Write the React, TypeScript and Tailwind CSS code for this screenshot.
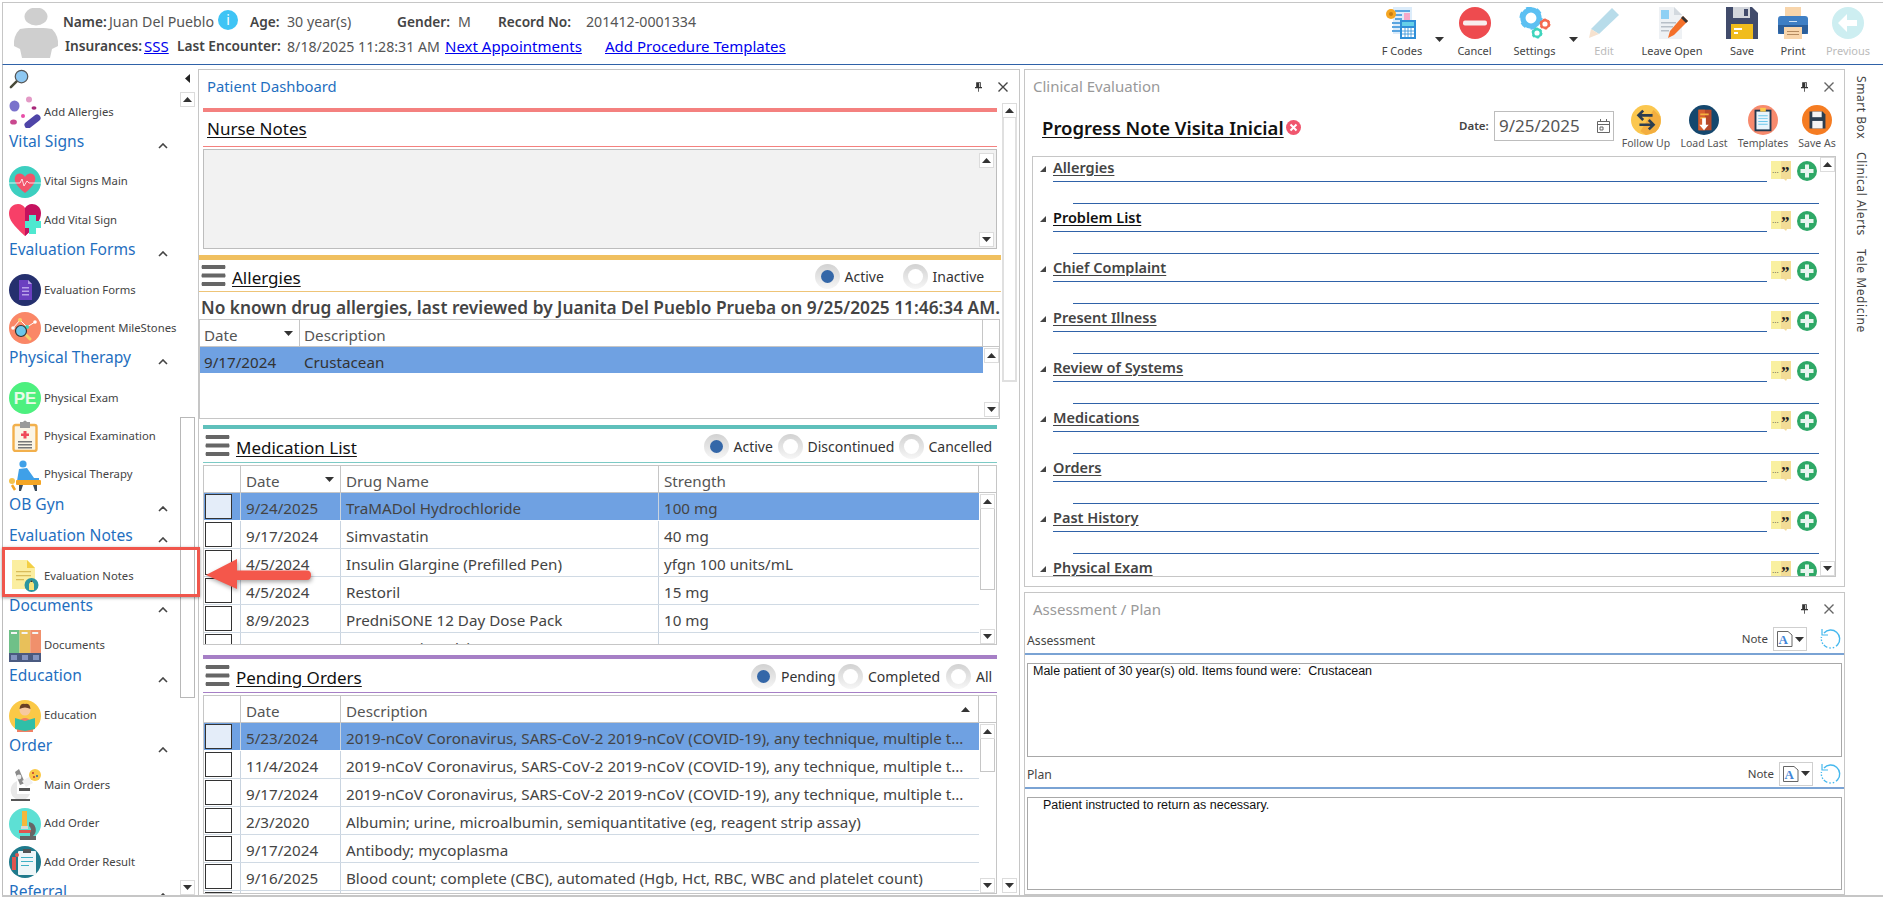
import type { ReactNode } from "react";

const Ic = ({ s = 32, children }: { s?: number; children: ReactNode }) => (
  <svg width={s} height={s} viewBox="0 0 32 32" className="shrink-0">
    {children}
  </svg>
);

const Tri = ({ up = false, dark = "#333" }: { up?: boolean; dark?: string }) => (
  <svg width="9" height="5" viewBox="0 0 9 5">
    <path d={up ? "M0 5L4.5 0L9 5Z" : "M0 0L4.5 5L9 0Z"} fill={dark} />
  </svg>
);

const Gear = ({ x, y, r, c }: { x: number; y: number; r: number; c: string }) => (
  <g>
    <circle cx={x} cy={y} r={r} fill="none" stroke={c} strokeWidth={r * 0.45} strokeDasharray={`${r * 0.55} ${r * 0.5}`} />
    <circle cx={x} cy={y} r={r * 0.85} fill="none" stroke={c} strokeWidth={r * 0.55} />
  </g>
);

// toolbar icons
const FCodes = () => (
  <Ic>
    <path d="M7 0H26V27H7Z" fill="#dcecfa" />
    <path d="M9 3H24V5H9Z" fill="#5aa5e0" />
    <path d="M18 6H24V14H18Z" fill="#f7a8c8" />
    <path d="M9 7H16V9H9ZM9 11H16V13H9ZM6 15H14V17H6ZM6 19H14V21H6ZM6 23H14V25H6Z" fill="#5aa5e0" />
    <path d="M14 13H30V32H14Z" fill="#2f8fd8" />
    <path d="M16 15H28V19H16Z" fill="#66d0e8" />
    <path d="M16 21H28V30H16Z" fill="#fff" />
    <path d="M19 21V30M22 21V30M25 21V30M16 24H28M16 27H28" stroke="#2f8fd8" strokeWidth="0.8" />
    <circle cx="5" cy="7" r="5" fill="#f5a623" />
    <circle cx="5" cy="7" r="2" fill="#c97e10" />
  </Ic>
);
const Cancel = () => (
  <Ic>
    <circle cx="16" cy="16" r="16" fill="#ee4b4f" />
    <rect x="4" y="13.5" width="24" height="5" rx="2" fill="#f8eded" />
  </Ic>
);
const Settings = () => (
  <Ic>
    <Gear x={12} y={11} r={9.5} c="#5cc0f2" />
    <Gear x={26} y={17} r={4.5} c="#f4694f" />
    <Gear x={18} y={26} r={4.5} c="#3fd4bc" />
  </Ic>
);
const Edit = () => (
  <Ic>
    <path d="M24 1L31 8L11 27L3 22Z" fill="#b8dcea" />
    <path d="M3 22L11 27L1 31Z" fill="#f6e2cf" />
  </Ic>
);
const LeaveOpen = () => (
  <Ic>
    <path d="M3 0H18L26 8V32H3Z" fill="#eef1f4" />
    <path d="M18 0L26 8H18Z" fill="#d3d9df" />
    <path d="M5 3H13V12H5Z" fill="#8ed0f4" />
    <path d="M5 15H20V16.5H5ZM5 19H17V20.5H5ZM5 23H13V24.5H5Z" fill="#b7bfc7" />
    <path d="M27 9L32 14L18 28L12 31L14 24Z" fill="#f4702a" />
    <path d="M27 9L32 14L30 16L25 11Z" fill="#333" />
  </Ic>
);
const Save = () => (
  <Ic>
    <path d="M0 0H26L32 6V32H0Z" fill="#414b6b" />
    <path d="M7 0H24V11H7Z" fill="#d3d6dc" />
    <path d="M18 2H22V9H18Z" fill="#414b6b" />
    <path d="M5 17H27V32H5Z" fill="#f0bc1c" />
    <path d="M8 21H16V23H8ZM8 25H12V27H8Z" fill="#fff" />
  </Ic>
);
const Print = () => (
  <Ic>
    <path d="M8 0H24V12H8Z" fill="#f8d5ab" />
    <path d="M1 12Q1 9 4 9H28Q31 9 31 12V27H1Z" fill="#3f7fc4" />
    <path d="M1 18H31V23Q31 27 28 27H4Q1 27 1 23Z" fill="#2c5f9b" />
    <path d="M7 20H25V32H7Z" fill="#f8d5ab" />
    <path d="M10 24H22V25H10ZM10 27H22V28H10Z" fill="#b58b60" />
    <path d="M12 14H20V15H12Z" fill="#cfe2f5" />
  </Ic>
);
const Previous = () => (
  <Ic>
    <circle cx="16" cy="16" r="16" fill="#cdeef1" />
    <path d="M6 16L15 7V13H25V19H15V25Z" fill="#fff" />
  </Ic>
);

// sidebar icons
const Magnifier = () => (
  <Ic s={20}>
    <path d="M13 19L3 29" stroke="#4a4a3a" strokeWidth="4" strokeLinecap="round" />
    <circle cx="20" cy="12" r="10" fill="#8ec8f2" stroke="#555" strokeWidth="2" />
  </Ic>
);
const Allergy = () => (
  <Ic>
    <ellipse cx="5.5" cy="10" rx="5" ry="5.5" fill="#7a72cc" />
    <circle cx="20" cy="3.5" r="3" fill="#e39ac6" />
    <ellipse cx="25" cy="12" rx="2.5" ry="1.8" fill="#a8287a" />
    <circle cx="14" cy="20" r="2" fill="#e84fa8" />
    <ellipse cx="4.5" cy="26" rx="3.4" ry="2.6" fill="#c9488f" />
    <path d="M19 29L28 22" stroke="#4f45a8" strokeWidth="7" strokeLinecap="round" />
  </Ic>
);
const VitalMain = () => (
  <Ic>
    <circle cx="16" cy="16" r="16" fill="#3dcfc0" />
    <path d="M16 27C6 19 5 14 6 11C8 6 14 7 16 11C18 7 24 6 26 11C27 14 26 19 16 27Z" fill="#f2536a" />
    <path d="M0 17H11L13 13L15 20L18 15L20 17H32" stroke="#fff" strokeWidth="0.8" fill="none" />
  </Ic>
);
const VitalAdd = () => (
  <Ic>
    <path d="M16 32C4 21 0 16 0 9C0 3 5 0 9 0C12 0 15 2 16 4Z" fill="#f73f68" />
    <path d="M16 32C28 21 32 16 32 9C32 3 27 0 23 0C20 0 17 2 16 4Z" fill="#c4125f" />
    <path d="M16 4L16 32L21 27V4Z" fill="#c4125f" />
    <path d="M20 11H27V17H32V24H27V30H20V24H16V17H20Z" fill="#4fe8d0" />
  </Ic>
);
const EvalForms = () => (
  <Ic>
    <circle cx="16" cy="16" r="16" fill="#25306e" />
    <path d="M10 6H19L23 10V26H10Z" fill="#6b3fc0" />
    <path d="M19 6L23 10H19Z" fill="#b8a0e8" />
    <path d="M13 13H20V14.5H13ZM13 16.5H20V18H13ZM13 20H20V21.5H13Z" fill="#b8a0e8" />
  </Ic>
);
const Milestones = () => (
  <Ic>
    <circle cx="16" cy="16" r="16" fill="#fa8767" />
    <path d="M4 16L11 8L18 15L26 10" stroke="#fff" strokeWidth="1" fill="none" />
    <circle cx="4" cy="16" r="1.8" fill="#fff" />
    <circle cx="11" cy="8" r="2" fill="#f8d06a" />
    <circle cx="18" cy="15" r="2" fill="#3fd4bc" />
    <circle cx="26" cy="10" r="1.8" fill="#fff" />
    <path d="M17 23L21 27" stroke="#f8d06a" strokeWidth="3" strokeLinecap="round" />
    <circle cx="12" cy="19" r="5.5" fill="#6cc6ea" stroke="#333" strokeWidth="1.2" />
  </Ic>
);
const PE = () => (
  <Ic>
    <circle cx="16" cy="16" r="16" fill="#4df07f" />
    <text x="16" y="22" textAnchor="middle" fontSize="17" fontWeight="900" fill="#e9fbe9" fontFamily="Liberation Sans">PE</text>
  </Ic>
);
const PhysExam = () => (
  <Ic>
    <rect x="4.5" y="5" width="23" height="26" rx="2" fill="#fbf5e6" stroke="#f2b04c" strokeWidth="2.4" />
    <path d="M11 2H14Q16 -1 18 2H21V8H11Z" fill="#9a9a9a" />
    <path d="M14.5 11H17.5V13.5H20V16H17.5V18.5H14.5V16H12V13.5H14.5Z" fill="#ef4a5a" />
    <path d="M9 21H23V22.4H9ZM9 24H23V25.4H9ZM9 27H23V28.4H9Z" fill="#777" />
  </Ic>
);
const PhysTherapy = () => (
  <Ic>
    <circle cx="14" cy="5" r="3.6" fill="#3fa0e8" />
    <path d="M10 10L18 9L25 19H30V22H8Z" fill="#3fa0e8" />
    <rect x="7" y="21" width="25" height="5" rx="1" fill="#f4a524" />
    <circle cx="3" cy="22" r="3" fill="#f4c24c" />
    <path d="M10 26H14L12 32H10ZM24 26H28V32H26Z" fill="#3a4a5a" />
    <path d="M3 26L6 31" stroke="#f4a524" strokeWidth="2.5" />
  </Ic>
);
const EvalNotes = () => (
  <Ic>
    <path d="M3 0H18L26 8V29H3Z" fill="#fbeea0" />
    <path d="M18 0L26 8H18Z" fill="#f3cf45" />
    <path d="M7 11H22V12.3H7ZM7 15H22V16.3H7ZM7 19H15V20.3H7Z" fill="#d8bc5a" />
    <circle cx="22.5" cy="25" r="7" fill="#2b96a0" />
    <path d="M20 30V24L22.5 20L25 24V30Z" fill="#f6e27a" />
    <path d="M21.3 22L22.5 20L23.7 22Z" fill="#333" />
  </Ic>
);
const Docs = () => (
  <Ic>
    <path d="M0 0H10.6V23H0Z" fill="#6fc088" />
    <path d="M10.6 0H21.2V23H10.6Z" fill="#e8c05a" />
    <path d="M21.2 0H32V23H21.2Z" fill="#f0906c" />
    <path d="M0 23H32V32H0Z" fill="#4a5a80" />
    <path d="M2 2H8V4H2ZM12.6 2H18.6V4H12.6ZM23.2 2H29.2V4H23.2Z" fill="#f4f4f4" />
    <path d="M2 25H8V30H2ZM13 25H19V30H13ZM24 25H30V30H24Z" fill="#8494c0" />
  </Ic>
);
const Education = () => (
  <Ic>
    <circle cx="16" cy="16" r="16" fill="#fbc947" />
    <path d="M8 32Q8 18 16 18Q24 18 24 32Z" fill="#f07f63" />
    <circle cx="16" cy="10" r="5.5" fill="#f7c9a0" />
    <path d="M10.5 9Q11 3 16 4Q21 3 21.5 9Q16 6 10.5 9Z" fill="#6a4026" />
    <path d="M6 18L16 21L26 18V29L16 31L6 29Z" fill="#2fbfa8" />
  </Ic>
);
const MainOrders = () => (
  <Ic>
    <path d="M8 12A10 10 0 1 0 21 25H8Z" fill="#e8e8e8" />
    <path d="M10 0L16 14L11 16L6 3Z" fill="#8a8a8a" />
    <circle cx="10" cy="8" r="2.4" fill="#eee" />
    <path d="M10 19H21V22H10ZM2 30H21V32H2Z" fill="#555" />
    <path d="M13 12L20 8L24 14L17 18Z" fill="#f0f0f0" />
    <circle cx="26" cy="6" r="6" fill="#fbc947" />
    <circle cx="24" cy="4" r="1" fill="#c0392b" />
    <circle cx="28" cy="7" r="1" fill="#2c5f9b" />
    <circle cx="25" cy="8" r="1" fill="#c0392b" />
  </Ic>
);
const AddOrder = () => (
  <Ic>
    <circle cx="16" cy="16" r="16" fill="#5de0d4" />
    <path d="M13 3H18V18H13Z" fill="#f4b73c" />
    <path d="M12 18H19V21H12Z" fill="#d8d8d8" />
    <path d="M10 22H25V25H10Z" fill="#e0554f" />
    <path d="M11 28H27V32H11Z" fill="#666" />
    <path d="M20 14A8 8 0 0 1 24 28H21V25A5 5 0 0 0 20 18Z" fill="#666" />
  </Ic>
);
const OrderResult = () => (
  <Ic>
    <circle cx="16" cy="16" r="16" fill="#1f7a8c" />
    <rect x="9" y="5" width="18" height="24" rx="1" fill="#eef6f8" />
    <path d="M14 3H22V7H14Z" fill="#555" />
    <path d="M12 11H24V12H12ZM12 15H24V16H12ZM12 19H20V20H12Z" fill="#3fb0c4" />
    <circle cx="8" cy="9" r="2" fill="#e0554f" />
    <path d="M3 11H7V24H3Z" fill="#e0554f" />
  </Ic>
);

// clinical toolbar
const FollowUp = () => (
  <Ic s={30}>
    <circle cx="16" cy="16" r="16" fill="#fbc74f" />
    <path d="M26 29A16 16 0 0 0 31 12L24 5L10 28L16 32Z" fill="#f3ae3f" />
    <path d="M23 11H9M13 6L8 11L13 16M9 21H23M19 16L24 21L19 26" stroke="#2c3e50" strokeWidth="2.8" fill="none" />
  </Ic>
);
const LoadLast = () => (
  <Ic s={30}>
    <circle cx="16" cy="16" r="16" fill="#14476e" />
    <path d="M10 5H24V27H10Z" fill="#b5482a" />
    <path d="M10 5H17V27H10Z" fill="#d75f2f" />
    <path d="M12 9H21V11H12ZM12 13H18V15H12Z" fill="#f5b340" />
    <path d="M14 14H18V21H21L16 27L11 21H14Z" fill="#fff" />
  </Ic>
);
const Templates = () => (
  <Ic s={30}>
    <circle cx="16" cy="16" r="16" fill="#f78a6d" />
    <rect x="7" y="5" width="18" height="23" fill="#22384f" />
    <rect x="9" y="7" width="14" height="19" fill="#e8f4fb" />
    <path d="M11 11H21V12H11ZM11 14H21V15H11ZM11 17H21V18H11ZM11 20H21V21H11Z" fill="#6cc6ea" />
    <path d="M13 3H19V7H13Z" fill="#fbc947" />
  </Ic>
);
const SaveAs = () => (
  <Ic s={30}>
    <circle cx="16" cy="16" r="16" fill="#f57c22" />
    <path d="M8 7H22L25 10V25H8Z" fill="#2c3e50" />
    <path d="M11 7H21V13H11Z" fill="#f4f4f4" />
    <path d="M11 17H22V25H11Z" fill="#f4f4f4" />
  </Ic>
);
const Quote = () => (
  <svg width="20" height="20" viewBox="0 0 20 20" className="shrink-0">
    <path d="M0 0H10V18H0Z" fill="#f9f0a0" />
    <path d="M10 0H20V18H16L15 20L13 18H10Z" fill="#f3dc96" />
    <text x="1" y="12" fontSize="8" fill="#333" fontFamily="Liberation Sans">...</text>
    <text x="10" y="17" fontSize="17" fontWeight="700" fill="#222" fontFamily="Liberation Serif">”</text>
  </svg>
);
const Plus = () => (
  <svg width="20" height="20" viewBox="0 0 20 20" className="shrink-0">
    <circle cx="10" cy="10" r="10" fill="#2ea866" />
    <path d="M8 3.5H12V8H16.5V12H12V16.5H8V12H3.5V8H8Z" fill="#e8f5ee" />
  </svg>
);
const Spin = () => (
  <svg width="22" height="22" viewBox="0 0 22 22" className="shrink-0">
    <path d="M5 5A9 9 0 1 1 6 18" stroke="#45b8ee" strokeWidth="1.4" strokeDasharray="30 2 1.5 2 1.5 2" fill="none" />
    <path d="M6 18A9 9 0 0 1 2.5 9" stroke="#45b8ee" strokeWidth="1.4" strokeDasharray="1.5 1.5" fill="none" />
    <path d="M3 1V7H9" fill="none" stroke="#45b8ee" strokeWidth="1.2" />
  </svg>
);
const NoteDoc = () => (
  <svg width="16" height="16" viewBox="0 0 16 16" className="shrink-0">
    <path d="M0.5 0.5H11L15 4V15.5H0.5Z" fill="#fff" stroke="#666" />
    <text x="1.5" y="13" fontSize="13" fontWeight="700" fill="#3f86d8" fontFamily="Liberation Serif">A</text>
  </svg>
);
const Calendar = () => (
  <svg width="13" height="14" viewBox="0 0 13 14">
    <path d="M0.5 2.5H12.5V13.5H0.5ZM0.5 5.5H12.5M3.5 0V3M9.5 0V3M3 8H6V11H3Z" fill="none" stroke="#666" strokeWidth="1" />
  </svg>
);
const Pin = () => (
  <svg width="7" height="10" viewBox="0 0 9 12">
    <path d="M1.5 0H7.5V6H9V7.5H5V12H4V7.5H0V6H1.5Z" fill="#333" />
    <path d="M5.5 1H6.5V6H5.5Z" fill="#fff" />
  </svg>
);
const Close = ({ c = "#444" }: { c?: string }) => (
  <svg width="10" height="10" viewBox="0 0 10 10">
    <path d="M0.5 0.5L9.5 9.5M9.5 0.5L0.5 9.5" stroke={c} strokeWidth="1.4" />
  </svg>
);
const Chevron = () => (
  <svg width="10" height="6" viewBox="0 0 10 6">
    <path d="M1 5L5 1L9 5" fill="none" stroke="#444" strokeWidth="1.6" />
  </svg>
);
const Burger = () => (
  <svg width="25" height="21" viewBox="0 0 25 21" className="shrink-0">
    <path d="M1 0H24Q25 2 24 4H1Q0 2 1 0ZM1 8.5H24Q25 10.5 24 12.5H1Q0 10.5 1 8.5ZM1 17H24Q25 19 24 21H1Q0 19 1 17Z" fill="#666" />
  </svg>
);

const ScrollBtn = ({ up = false }: { up?: boolean }) => (
  <div className="flex h-[15px] w-[15px] shrink-0 items-center justify-center border border-[#dcdcdc] bg-white">
    <Tri up={up} />
  </div>
);

const Radio = ({ on = false, label, w }: { on?: boolean; label: string; w: string }) => (
  <div className={`flex shrink-0 items-center pt-[1px] ${w}`}>
    <div className="flex h-[25px] w-[25px] shrink-0 items-center justify-center rounded-full bg-linear-to-b from-[#d2d2d2] to-[#f6f6f6]">
      <div className={on ? "h-[13px] w-[13px] rounded-full bg-[#3467a8]" : "h-[15px] w-[15px] rounded-full bg-white"} />
    </div>
    <span className="ml-[5px] pt-[1px] text-[14px] whitespace-nowrap text-[#333]">{label}</span>
  </div>
);

const SectionHead = ({
  title,
  bar,
  line,
  children,
}: {
  title: string;
  bar: string;
  line: string;
  children?: ReactNode;
}) => (
  <>
    <div className={`shrink-0 ${bar}`} />
    <div className={`flex shrink-0 items-center ${line}`}>
      <div className="ml-[2px] flex items-center">
        <Burger />
      </div>
      <span className="ml-[6px] flex-1 pt-[5px] text-[17px] text-[#111] underline underline-offset-2">{title}</span>
      {children}
    </div>
  </>
);

const Check = ({ on = false }: { on?: boolean }) => (
  <div className={`ml-[1px] h-[25px] w-[27px] border border-[#333] ${on ? "bg-[#e4edf9]" : "bg-white"}`} />
);

const TableRow = ({ cells, widths, on = false }: { cells: string[]; widths: string[]; on?: boolean }) => (
  <div className={`flex h-[28px] shrink-0 border-b text-[15.2px] text-[#444] ${on ? "border-white bg-[#6fa1e2]" : "border-[#d0dae4]"}`}>
    <div className="flex w-[37px] shrink-0 items-center border-r border-[#c9d4e0]">
      <Check on={on} />
    </div>
    {cells.map((c, i) => (
      <div
        key={i}
        className={`flex shrink-0 items-center overflow-hidden pt-[3px] pl-[5px] whitespace-nowrap ${widths[i]} ${i === 0 || (i === 1 && cells.length > 2) ? "border-r border-[#c9d4e0]" : ""}`}
      >
        {c}
      </div>
    ))}
  </div>
);

const meds = [
  ["9/24/2025", "TraMADol Hydrochloride", "100 mg"],
  ["9/17/2024", "Simvastatin", "40 mg"],
  ["4/5/2024", "Insulin Glargine (Prefilled Pen)", "yfgn 100 units/mL"],
  ["4/5/2024", "Restoril", "15 mg"],
  ["8/9/2023", "PredniSONE 12 Day Dose Pack", "10 mg"],
  ["7/9/2019", "Atorvastatin Calcium", "40 mg"],
];
const covid = "2019-nCoV Coronavirus, SARS-CoV-2 2019-nCoV (COVID-19), any technique, multiple t...";
const orders = [
  ["5/23/2024", covid],
  ["11/4/2024", covid],
  ["9/17/2024", covid],
  ["2/3/2020", "Albumin; urine, microalbumin, semiquantitative (eg, reagent strip assay)"],
  ["9/17/2024", "Antibody; mycoplasma"],
  ["9/16/2025", "Blood count; complete (CBC), automated (Hgb, Hct, RBC, WBC and platelet count)"],
  ["", ""],
];

const side: { h?: boolean; label: string; icon?: ReactNode }[] = [
  { label: "Add Allergies", icon: <Allergy /> },
  { h: true, label: "Vital Signs" },
  { label: "Vital Signs Main", icon: <VitalMain /> },
  { label: "Add Vital Sign", icon: <VitalAdd /> },
  { h: true, label: "Evaluation Forms" },
  { label: "Evaluation Forms", icon: <EvalForms /> },
  { label: "Development MileStones", icon: <Milestones /> },
  { h: true, label: "Physical Therapy" },
  { label: "Physical Exam", icon: <PE /> },
  { label: "Physical Examination", icon: <PhysExam /> },
  { label: "Physical Therapy", icon: <PhysTherapy /> },
  { h: true, label: "OB Gyn" },
  { h: true, label: "Evaluation Notes" },
  { label: "Evaluation Notes", icon: <EvalNotes /> },
  { h: true, label: "Documents" },
  { label: "Documents", icon: <Docs /> },
  { h: true, label: "Education" },
  { label: "Education", icon: <Education /> },
  { h: true, label: "Order" },
  { label: "Main Orders", icon: <MainOrders /> },
  { label: "Add Order", icon: <AddOrder /> },
  { label: "Add Order Result", icon: <OrderResult /> },
  { h: true, label: "Referral" },
];

const Sidebar = () => (
  <aside className="flex w-[196px] shrink-0 overflow-hidden border-l border-[#bdbdbd]">
    <div className="w-[177px] shrink-0 overflow-hidden pl-[6px]">
      <div className="h-[28px] pt-[4px]">
        <Magnifier />
      </div>
      {side.map((s, i) =>
        s.h ? (
          <div key={i} className="flex h-[31.5px] items-start">
            <span className="w-[149px] text-[15.6px] leading-[20px] text-[#1f6fc0]">{s.label}</span>
            <span className="mt-[12px] flex">
              <Chevron />
            </span>
          </div>
        ) : (
          <div key={i} className="flex h-[38.3px] items-center">
            {s.icon}
            <span className="ml-[3px] text-[11.3px] whitespace-nowrap text-[#444]">{s.label}</span>
          </div>
        ),
      )}
    </div>
    <div className="flex w-[15px] shrink-0 flex-col">
      <div className="flex h-[27px] items-center justify-center pt-[1px]">
        <svg width="5" height="9" viewBox="0 0 5 9">
          <path d="M5 0L0 4.5L5 9Z" fill="#222" />
        </svg>
      </div>
      <ScrollBtn up />
      <div className="h-[775px]">
        <div className="mt-[310px] h-[281px] border border-[#b8b8b8]" />
      </div>
      <ScrollBtn />
    </div>
  </aside>
);

const Dashboard = () => (
  <section className="mt-[4px] flex h-[828px] w-[822px] shrink-0 flex-col overflow-hidden border border-[#c6c6c6]">
    <div className="flex h-[33px] shrink-0 items-center">
      <span className="ml-[8px] flex-1 text-[14.8px] text-[#1f6fc0]">Patient Dashboard</span>
      <Pin />
      <span className="mr-[11px] ml-[16px] flex">
        <Close />
      </span>
    </div>
    <div className="flex h-[794px] shrink-0">
      <div className="flex w-[803px] shrink-0 flex-col overflow-hidden">
        <div className="mt-[5px] ml-[4px] h-[4px] w-[794px] shrink-0 bg-[#f4817f]" />
        <div className="ml-[4px] flex h-[35px] w-[794px] shrink-0 items-center border-b border-[#f4817f]">
          <span className="ml-[4px] text-[17px] text-[#111] underline underline-offset-2">Nurse Notes</span>
        </div>
        <div className="mt-[2px] ml-[4px] flex h-[100px] w-[794px] shrink-0 justify-end border border-[#bdbdbd] bg-[#f2f2f2] pt-[3px] pr-[2px]">
          <div className="flex h-[94px] w-[15px] flex-col justify-between">
            <ScrollBtn up />
            <ScrollBtn />
          </div>
        </div>

        <div className="mt-[6px]" />
        <SectionHead title="Allergies" bar="h-[5px] w-[802px] bg-[#f0c060]" line="h-[32px] w-[802px] border-b border-[#eec477]">
          <Radio on label="Active" w="w-[88px]" />
          <Radio label="Inactive" w="w-[98.5px]" />
        </SectionHead>
        <div className="flex h-[27px] shrink-0 items-center pt-[4px] pl-[2px] text-[17.3px] font-semibold whitespace-nowrap text-[#444]">
          No known drug allergies, last reviewed by Juanita Del Pueblo Prueba on 9/25/2025 11:46:34 AM.
        </div>
        <div className="flex h-[100px] w-[801px] shrink-0 flex-col border border-[#c6c6c6]">
          <div className="flex h-[27px] shrink-0 border-b border-[#c6c6c6] text-[15.2px] text-[#555]">
            <div className="flex w-[100px] shrink-0 items-center justify-between border-r border-[#c6c6c6] pr-[6px] pl-[4px]">
              <span className="pt-[4px]">Date</span>
              <Tri />
            </div>
            <div className="flex w-[683px] shrink-0 items-center border-r border-[#c6c6c6] pt-[4px] pl-[4px]">Description</div>
          </div>
          <div className="flex flex-1">
            <div className="w-[783px] shrink-0">
              <div className="flex h-[26px] items-center bg-[#6fa1e2] pt-[4px] text-[15.2px] text-[#333]">
                <span className="w-[100px] pl-[4px]">9/17/2024</span>
                <span className="pl-[4px]">Crustacean</span>
              </div>
            </div>
            <div className="flex flex-1 flex-col items-center justify-between py-[1px]">
              <ScrollBtn up />
              <ScrollBtn />
            </div>
          </div>
        </div>

        <div className="mt-[6px]" />
        <SectionHead title="Medication List" bar="ml-[4px] h-[4px] w-[794px] bg-[#5fc0bb]" line="ml-[4px] h-[34px] w-[794px] border-b border-[#7ccac5]">
          <Radio on label="Active" w="w-[74px]" />
          <Radio label="Discontinued" w="w-[121px]" />
          <Radio label="Cancelled" w="w-[98.5px]" />
        </SectionHead>
        <div className="mt-[2px] ml-[4px] flex h-[180px] w-[794px] shrink-0 flex-col overflow-hidden border border-[#c6c6c6]">
          <div className="flex h-[27px] shrink-0 border-b border-[#c6c6c6] text-[15.2px] text-[#555]">
            <div className="w-[37px] shrink-0 border-r border-[#c6c6c6]" />
            <div className="flex w-[100px] shrink-0 items-center justify-between border-r border-[#c6c6c6] pr-[6px] pl-[5px]">
              <span className="pt-[4px]">Date</span>
              <Tri />
            </div>
            <div className="flex w-[318px] shrink-0 items-center border-r border-[#c6c6c6] pt-[4px] pl-[5px]">Drug Name</div>
            <div className="flex w-[320px] shrink-0 items-center border-r border-[#c6c6c6] pt-[4px] pl-[5px]">Strength</div>
          </div>
          <div className="flex flex-1 overflow-hidden">
            <div className="w-[775px] shrink-0">
              {meds.map((m, i) => (
                <TableRow key={i} cells={m} widths={["w-[100px]", "w-[318px]", "w-[320px]"]} on={i === 0} />
              ))}
            </div>
            <div className="flex flex-1 flex-col items-center pt-[1px]">
              <ScrollBtn up />
              <div className="h-[81px] w-[15px] border border-t-0 border-[#c6c6c6]" />
              <div className="flex-1" />
              <ScrollBtn />
            </div>
          </div>
        </div>

        <div className="mt-[10px]" />
        <SectionHead title="Pending Orders" bar="ml-[4px] h-[4px] w-[794px] bg-[#a67fc6]" line="ml-[4px] h-[34px] w-[794px] border-b border-[#a67fc6]">
          <Radio on label="Pending" w="w-[87px]" />
          <Radio label="Completed" w="w-[108px]" />
          <Radio label="All" w="w-[51px]" />
        </SectionHead>
        <div className="mt-[2px] ml-[4px] flex h-[199px] w-[794px] shrink-0 flex-col overflow-hidden border border-[#c6c6c6]">
          <div className="flex h-[27px] shrink-0 border-b border-[#c6c6c6] text-[15.2px] text-[#555]">
            <div className="w-[37px] shrink-0 border-r border-[#c6c6c6]" />
            <div className="flex w-[100px] shrink-0 items-center border-r border-[#c6c6c6] pt-[4px] pl-[5px]">Date</div>
            <div className="flex w-[638px] shrink-0 items-center justify-between border-r border-[#c6c6c6] pr-[8px] pl-[5px]">
              <span className="pt-[4px]">Description</span>
              <Tri up />
            </div>
          </div>
          <div className="flex flex-1 overflow-hidden">
            <div className="w-[775px] shrink-0">
              {orders.map((o, i) => (
                <TableRow key={i} cells={o} widths={["w-[100px]", "w-[638px]"]} on={i === 0} />
              ))}
            </div>
            <div className="flex flex-1 flex-col items-center pt-[1px]">
              <ScrollBtn up />
              <div className="h-[33px] w-[15px] border border-t-0 border-[#c6c6c6]" />
              <div className="flex-1" />
              <ScrollBtn />
            </div>
          </div>
        </div>
      </div>
      <div className="flex w-[15px] shrink-0 flex-col">
        <ScrollBtn up />
        <div className="h-[264px] border-x-2 border-b-2 border-[#e0e0e0]" />
        <div className="flex-1" />
        <div className="mb-[4px]">
          <ScrollBtn />
        </div>
      </div>
    </div>
  </section>
);

const treeItems = ["Allergies", "Problem List", "Chief Complaint", "Present Illness", "Review of Systems", "Medications", "Orders", "Past History", "Physical Exam"];

const ClinBtn = ({ icon, label, w }: { icon: ReactNode; label: string; w: string }) => (
  <div className={`flex shrink-0 flex-col items-center ${w}`}>
    {icon}
    <span className="mt-[1px] text-[10.5px] whitespace-nowrap text-[#555]">{label}</span>
  </div>
);

const Clinical = () => (
  <section className="flex h-[518px] shrink-0 flex-col overflow-hidden border border-[#c6c6c6]">
    <div className="flex h-[33px] shrink-0 items-center">
      <span className="ml-[8px] flex-1 text-[15px] text-[#999]">Clinical Evaluation</span>
      <Pin />
      <span className="mr-[10px] ml-[16px] flex">
        <Close c="#666" />
      </span>
    </div>
    <div className="flex h-[53px] shrink-0">
      <div className="flex flex-1 items-center pb-[4px] pl-[17px]">
        <span className="text-[18.5px] font-semibold text-[#111] underline underline-offset-2">Progress Note Visita Inicial</span>
        <svg width="15" height="15" viewBox="0 0 15 15" className="ml-[2px]">
          <circle cx="7.5" cy="7.5" r="7.5" fill="#f0566e" />
          <path d="M4.5 4.5L10.5 10.5M10.5 4.5L4.5 10.5" stroke="#fff" strokeWidth="2" />
        </svg>
      </div>
      <div className="flex h-[46px] items-center">
        <span className="w-[35px] text-[11.5px] font-semibold text-[#444]">Date:</span>
        <div className="flex h-[30px] w-[120px] items-center justify-between border border-[#bdbdbd] pr-[3px] pl-[4px] text-[17px] text-[#555]">
          9/25/2025
          <Calendar />
        </div>
      </div>
      <div className="ml-[3px] flex pt-[2px] pr-[3px]">
        <ClinBtn icon={<FollowUp />} label="Follow Up" w="w-[58px]" />
        <ClinBtn icon={<LoadLast />} label="Load Last" w="w-[58px]" />
        <ClinBtn icon={<Templates />} label="Templates" w="w-[60px]" />
        <ClinBtn icon={<SaveAs />} label="Save As" w="w-[48px]" />
      </div>
    </div>
    <div className="ml-[7px] flex h-[421px] w-[804px] shrink-0 overflow-hidden border border-[#c6c6c6]">
      <div className="w-[787px] shrink-0 overflow-hidden">
        {treeItems.map((t) => (
          <div key={t} className="h-[50px]">
            <div className="flex h-[26px] items-start">
              <svg width="6" height="6" viewBox="0 0 6 6" className="mt-[9px] ml-[7px] shrink-0">
                <path d="M6 0V6H0Z" fill="#444" />
              </svg>
              <div className="ml-[7px] h-[25px] w-[714px] shrink-0 border-b border-[#2f62a8] leading-[21px]">
                <span className={`text-[14.5px] font-semibold underline underline-offset-2 ${t === "Problem List" ? "text-[#111]" : "text-[#444]"}`}>{t}</span>
              </div>
              <div className="mt-[4px] ml-[4px] flex items-center gap-[6px]">
                <Quote />
                <Plus />
              </div>
            </div>
            <div className="mt-[20px] ml-[40px] h-[1px] w-[746px] bg-[#2f62a8]" />
          </div>
        ))}
      </div>
      <div className="flex w-[15px] shrink-0 flex-col justify-between">
        <ScrollBtn up />
        <ScrollBtn />
      </div>
    </div>
  </section>
);

const NoteRow = ({ label, row, gap }: { label: string; row: string; gap: string }) => (
  <div className={`flex shrink-0 items-center border-b-2 border-[#7aa3d4] pl-[2px] ${row}`}>
    <span className="flex-1 pt-[4px] text-[12.2px] text-[#444]">{label}</span>
    <span className="text-[11.5px] text-[#444]">Note</span>
    <div className={`ml-[5px] flex h-[24px] w-[34px] items-center justify-center gap-[2px] border border-[#cfcfcf] ${gap}`}>
      <NoteDoc />
      <Tri />
    </div>
    <Spin />
    <span className="w-[3px]" />
  </div>
);

const Assessment = () => (
  <section className="mt-[5px] flex h-[303px] shrink-0 flex-col overflow-hidden border border-[#c6c6c6]">
    <div className="flex h-[32px] shrink-0 items-center">
      <span className="ml-[8px] flex-1 text-[15px] text-[#999]">Assessment / Plan</span>
      <Pin />
      <span className="mr-[10px] ml-[16px] flex">
        <Close c="#666" />
      </span>
    </div>
    <NoteRow label="Assessment" row="h-[30px]" gap="mr-[12px]" />
    <div className="mt-[8px] ml-[2px] h-[94px] w-[815px] shrink-0 border border-[#a8a8a8] px-[5px] font-['Liberation_Sans',sans-serif] text-[12.5px] leading-[14px] text-[#111]">
      Male patient of 30 year(s) old. Items found were:&nbsp; Crustacean
    </div>
    <NoteRow label="Plan" row="mt-[3px] h-[29px]" gap="mr-[6px]" />
    <div className="mt-[8px] ml-[2px] h-[93px] w-[815px] shrink-0 border border-[#a8a8a8] pl-[15px] font-['Liberation_Sans',sans-serif] text-[12.5px] leading-[14px] text-[#111]">
      Patient instructed to return as necessary.
    </div>
  </section>
);

const Tool = ({ icon, label, w, off = false }: { icon: ReactNode; label: string; w: string; off?: boolean }) => (
  <div className={`flex shrink-0 flex-col items-center ${w}`}>
    {icon}
    <span className={`mt-[4px] text-[11px] whitespace-nowrap ${off ? "text-[#bbb]" : "text-[#444]"}`}>{label}</span>
  </div>
);
const Caret = () => (
  <div className="flex h-[36px] w-[14px] shrink-0 items-end justify-center pb-[1px]">
    <Tri />
  </div>
);

const lbl = "shrink-0 pt-[5px] text-[13.7px] font-semibold whitespace-nowrap text-[#444]";
const val = "shrink-0 pt-[5px] text-[14.2px] whitespace-nowrap text-[#555]";
const link = "shrink-0 pt-[5px] text-[15px] whitespace-nowrap text-[#0000ee] underline";

const Header = () => (
  <header className="mt-[2px] ml-[2px] flex h-[63px] shrink-0 border-t border-b border-l border-[#c6c6c6] border-b-[#2f62a8]">
    <svg width="46" height="50" viewBox="0 0 46 50" className="mt-[5px] ml-[10px] shrink-0">
      <ellipse cx="23" cy="8.5" rx="11.5" ry="9" fill="#cfcfcf" />
      <path d="M7 21Q13 20 16 20H30Q33 20 39 21Q46 28 45 38L39 41L37 50H9L7 41L1 38Q0 28 7 21Z" fill="#cfcfcf" />
    </svg>
    <div className="ml-[4px] flex w-[800px] shrink-0 flex-col">
      <div className="flex h-[28px] items-center pt-[5px]">
        <span className={`${lbl} w-[46px]`}>Name:</span>
        <span className={`${val} w-[109px]`}>Juan Del Pueblo</span>
        <span className="flex h-[20px] w-[20px] shrink-0 items-center justify-center rounded-full bg-[#3fc4f5] text-[14px] text-white">i</span>
        <span className={`${lbl} ml-[12px] w-[37px]`}>Age:</span>
        <span className={`${val} w-[110px]`}>30 year(s)</span>
        <span className={`${lbl} w-[61px]`}>Gender:</span>
        <span className={`${val} w-[40px]`}>M</span>
        <span className={`${lbl} w-[88px]`}>Record No:</span>
        <span className={val}>201412-0001334</span>
      </div>
      <div className="flex h-[26px] items-center pl-[2px]">
        <span className={`${lbl} w-[79px]`}>Insurances:</span>
        <span className={`${link} w-[33px]`}>SSS</span>
        <span className={`${lbl} w-[110px]`}>Last Encounter:</span>
        <span className={`${val} w-[158px]`}>8/18/2025 11:28:31 AM</span>
        <span className={`${link} w-[160px]`}>Next Appointments</span>
        <span className={link}>Add Procedure Templates</span>
      </div>
    </div>
    <div className="flex flex-1 justify-end pt-[4px] pr-[5px]">
      <Tool icon={<FCodes />} label="F Codes" w="w-[60px]" />
      <Caret />
      <Tool icon={<Cancel />} label="Cancel" w="w-[57px]" />
      <Tool icon={<Settings />} label="Settings" w="w-[63px]" />
      <Caret />
      <Tool icon={<Edit />} label="Edit" w="w-[48px]" off />
      <Tool icon={<LeaveOpen />} label="Leave Open" w="w-[88px]" />
      <Tool icon={<Save />} label="Save" w="w-[52px]" />
      <Tool icon={<Print />} label="Print" w="w-[50px]" />
      <Tool icon={<Previous />} label="Previous" w="w-[60px]" off />
    </div>
  </header>
);

export default function App() {
  return (
    <div className="relative flex h-[902px] w-[1883px] flex-col overflow-hidden bg-white font-['Noto_Sans',sans-serif]">
      <Header />
      <div className="ml-[2px] flex h-[832px] shrink-0 border-b-2 border-[#c6c6c6]">
        <Sidebar />
        <Dashboard />
        <div className="mt-[4px] ml-[4px] flex w-[821px] shrink-0 flex-col">
          <Clinical />
          <Assessment />
        </div>
        <div className="flex flex-1 flex-col items-start pt-[11px] pl-[7px] text-[12px] leading-[18px] tracking-[0.55px] text-[#444]">
          <span className="[writing-mode:vertical-rl]">Smart Box</span>
          <span className="mt-[13px] [writing-mode:vertical-rl]">Clinical Alerts</span>
          <span className="mt-[13px] [writing-mode:vertical-rl]">Tele Medicine</span>
        </div>
      </div>

      {/* callout over the sidebar row */}
      <div className="absolute top-[547px] left-[2px] h-[50px] w-[198px] border-[3px] border-[#f0564c] shadow-[0_1px_3px_rgba(0,0,0,0.4)]" />
      <svg width="112" height="36" viewBox="0 0 112 36" className="absolute top-[557px] left-[204px] drop-shadow-[1px_2px_2px_rgba(0,0,0,0.35)]">
        <path d="M2 18L33 2V13.5H103Q107 13.5 107 18Q107 23 103 23H33V32Z" fill="#f4574b" />
      </svg>
    </div>
  );
}
